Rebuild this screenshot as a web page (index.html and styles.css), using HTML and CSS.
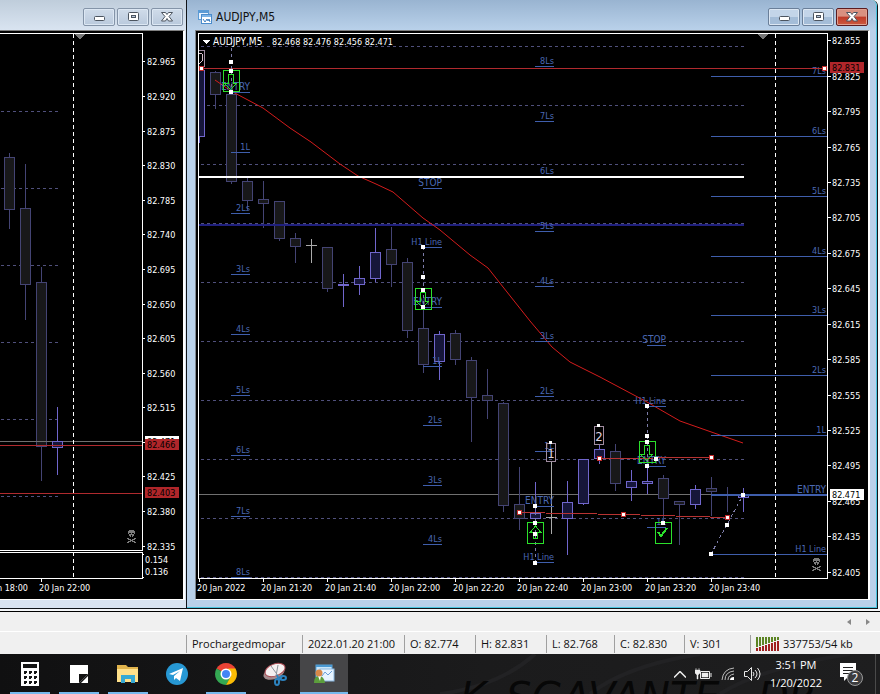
FILE: index.html
```html
<!DOCTYPE html>
<html lang="en">
<head>
<meta charset="utf-8">
<title>AUDJPY,M5</title>
<link rel="stylesheet" href="styles.css">
</head>
<body>
<svg class="defs" aria-hidden="true">
  <defs>
    <symbol id="min" viewBox="0 0 14 12"><rect x="2.5" y="5.5" width="10" height="4" rx="1" fill="#fff" stroke="#4c5560"/></symbol>
    <symbol id="max" viewBox="0 0 14 12"><rect x="2.5" y="1.5" width="10" height="8" rx="1" fill="#fff" stroke="#4c5560"/><rect x="5.5" y="4.5" width="4" height="2" fill="#b8c8dc" stroke="#4c5560"/></symbol>
    <symbol id="close" viewBox="0 0 14 12"><path d="M1.500 1.500h4l1.500 2 1.500-2h4l-3.500 4 3.500 4.500h-4l-1.500-2.500-1.500 2.500h-4l3.500-4.500z" fill="#fff" stroke="#4c5560"/></symbol>
    <symbol id="skull" viewBox="0 0 9 13"><path d="M2 0h5v1h1v3h-1v2h-1v1h-3v-1h-1v-2h-1v-3h1zM0 8h2v1h2v1h1v-1h2v-1h2v1h-1v1h-2v1h2v1h1v1h-2v-1h-2v-1h-1v1h-2v1h-2v-1h1v-1h2v-1h-2v-1h-1z" fill="#7c7c7c"/><path d="M2 3h2v1h-2zM5 3h2v1h-2zM4 5h1v2h-1z" fill="#000"/></symbol>
    <symbol id="dot" viewBox="0 0 4 4"><rect width="4" height="4" fill="#fff"/></symbol>
    <symbol id="reddot" viewBox="0 0 5 5"><rect x=".5" y=".5" width="4" height="4" fill="#fff" stroke="#c22a2a"/></symbol>
    <symbol id="down" viewBox="0 0 17 22"><path d="M.5.500h16v21h-16zM5.500 4.500h5v9h3l-6 6-6-6h4z" fill="none" stroke="#2be02b"/></symbol>
  </defs>
</svg>

<main class="workspace">
  <section class="window inactive" aria-label="Background chart">
    <div class="frame">
      <header class="titlebar">
        <div class="controls">
          <button aria-label="Minimize"><svg><use href="#min"/></svg></button>
          <button aria-label="Maximize"><svg><use href="#max"/></svg></button>
          <button aria-label="Close"><svg><use href="#close"/></svg></button>
        </div>
      </header>
      <div class="chart">
        <svg viewBox="0 31 183 568">
          <path class="grid" d="M1 111.500H59M1 188.500H59M1 265.500H59M1 342.500H59M1 419.500H59M1 496.500H59"/>
          <g class="bear">
            <path d="M9.500 153V229M25.500 164V320M41.500 267V481"/>
            <rect x="4.500" y="157.500" width="10" height="52"/><rect x="20.500" y="208.500" width="10" height="76"/><rect x="36.500" y="282.500" width="10" height="164"/>
          </g>
          <path class="price" d="M0 441.500H142"/>
          <g class="bull"><path d="M57.500 407V475"/><rect x="52.500" y="441.500" width="10" height="6"/></g>
          <path class="red" d="M0 445.500H142M0 493.500H142"/>
          <path class="session" d="M73.500 34V577"/>
          <path d="M74 34h11l-5 5h-1z" fill="#777"/>
          <path class="axis" d="M0 33.500H142.500V550.500H0M0 552.500H142.500V578.500H0M41.500 578V582M143 61.500h2M143 96.500h2M143 131.500h2M143 165.500h2M143 200.500h2M143 234.500h2M143 269.500h2M143 304.500h2M143 338.500h2M143 373.500h2M143 407.500h2M143 442.500h2M143 476.500h2M143 511.500h2M143 546.500h2M143 554.500h1M143 577.500h1"/>
          <g class="scale">
            <text x="147" y="65">82.965</text><text x="147" y="100">82.920</text><text x="147" y="135">82.875</text><text x="147" y="169">82.830</text><text x="147" y="204">82.785</text><text x="147" y="238">82.740</text><text x="147" y="273">82.695</text><text x="147" y="308">82.650</text><text x="147" y="342">82.605</text><text x="147" y="377">82.560</text><text x="147" y="411">82.515</text><text x="147" y="480">82.425</text><text x="147" y="515">82.380</text><text x="147" y="550">82.335</text>
            <text x="145" y="563">0.154</text><text x="145" y="575">0.136</text>
            <text x="28" y="591" text-anchor="end">20 Jan 18:00</text><text x="39" y="591">20 Jan 22:00</text>
          </g>
          <rect x="145" y="436" width="34" height="11" fill="#fff"/><text class="tag" x="147" y="445">82.471</text>
          <rect x="145" y="439" width="34" height="11" fill="#b0262a"/><text class="tag" x="147" y="448">82.466</text>
          <rect x="145" y="487" width="34" height="11" fill="#b0262a"/><text class="tag" x="147" y="496">82.403</text>
          <use href="#skull" x="127" y="530" width="9" height="13"/>
        </svg>
      </div>
    </div>
  </section>

  <section class="window active" aria-label="AUDJPY,M5 chart">
    <div class="frame">
      <header class="titlebar">
        <svg class="appicon" viewBox="0 0 14 14"><rect x=".5" y=".5" width="10" height="9" fill="#eaf4ff" stroke="#5b9bd5"/><path d="M1 2h9" stroke="#5b9bd5" stroke-width="2"/><rect x="3.500" y="4.500" width="10" height="9" fill="#fff" stroke="#4a8ccc"/><path d="M4 6h9" stroke="#7db4e6" stroke-width="2"/><path d="M5 9l2 3 2-3 1 2 1-2 1 3" fill="none" stroke="#3f7fc0"/></svg>
        <h1>AUDJPY,M5</h1>
        <div class="controls">
          <button aria-label="Minimize"><svg><use href="#min"/></svg></button>
          <button aria-label="Maximize"><svg><use href="#max"/></svg></button>
          <button class="close" aria-label="Close"><svg><use href="#close"/></svg></button>
        </div>
      </header>
      <div class="chart">
        <svg viewBox="196 31 672 568">
          <path class="grid" d="M201 46.500H744M201 105.500H744M201 164.500H744M201 223.500H744M201 282.500H744M201 341.500H744M201 400.500H744M201 459.500H744M201 518.500H744M201 577.500H744"/>
          <path class="price" d="M199 494.500H827"/>

          <!-- falling candles -->
          <g class="bear">
            <path d="M215.500 71V109M231.500 94V184M247.500 178V210M263.500 181V228M279.500 201V241M295.500 233V263M327.500 247V292M391.500 227V287M407.500 258V338M423.500 308V373M455.500 330V365M471.500 357V442M487.500 369V419M503.500 402V512M519.500 467V530M615.500 444V491M663.500 475V522M679.500 501V545M711.500 477V516M727.500 487V512"/>
            <rect x="210.500" y="72.500" width="10" height="22"/><rect x="226.500" y="94.500" width="10" height="87"/><rect x="242.500" y="181.500" width="10" height="19"/><rect x="258.500" y="199.500" width="10" height="4"/><rect x="274.500" y="201.500" width="10" height="37"/><rect x="290.500" y="238.500" width="10" height="8"/><rect x="322.500" y="247.500" width="10" height="41"/><rect x="386.500" y="249.500" width="10" height="15"/><rect x="402.500" y="262.500" width="10" height="68"/><rect x="418.500" y="328.500" width="10" height="36"/><rect x="450.500" y="333.500" width="10" height="26"/><rect x="466.500" y="360.500" width="10" height="37"/><rect x="482.500" y="395.500" width="10" height="5"/><rect x="498.500" y="403.500" width="10" height="102"/><rect x="514.500" y="504.500" width="10" height="14"/><rect x="610.500" y="451.500" width="10" height="32"/><rect x="658.500" y="478.500" width="10" height="20"/><rect x="674.500" y="501.500" width="10" height="3"/><rect x="706.500" y="488.500" width="10" height="3"/>
          </g>
          <!-- rising candles -->
          <g class="bull">
            <path d="M199.500 70V143M343.500 274V307M359.500 266V295M375.500 228V282M439.500 331V380M535.500 482V520M567.500 481V555M583.500 459V505M599.500 445V464M631.500 470V501M647.500 466V494M695.500 485V509M743.500 488V512"/>
            <path d="M199 70.500H204.500V136.500H199" class="body"/>
            <rect x="338.500" y="284.500" width="10" height="1"/><rect x="354.500" y="278.500" width="10" height="6"/><rect x="370.500" y="252.500" width="10" height="26"/><rect x="434.500" y="334.500" width="10" height="27"/><rect x="530.500" y="513.500" width="10" height="5"/><rect x="562.500" y="502.500" width="10" height="16"/><rect x="578.500" y="459.500" width="10" height="44"/><rect x="594.500" y="449.500" width="10" height="9"/><rect x="626.500" y="481.500" width="10" height="6"/><rect x="642.500" y="481.500" width="10" height="2"/><rect x="690.500" y="489.500" width="10" height="15"/><rect x="738.500" y="495.500" width="10" height="2"/>
          </g>
          <path class="doji" d="M311.500 239V263M306 245.500H317M551.500 461V534M546 517.500H557"/>

          <path d="M199 225H744" stroke="#20207e" stroke-width="2"/>
          <polyline class="average" points="215,80 231,91 263,108 290,128 311,142 340,164 358,176 376,184 393,192 423,218 440,230 470,255 488,268 507,292 530,321 552,347 570,362 600,377 647,402 680,421 717,434 743,443"/>
          <path d="M199 177H744" stroke="#fff" stroke-width="2"/>

          <!-- level marks -->
          <path class="levels" d="M231 92.500h19M231 152.500h19M231 213.500h19M231 274.500h19M231 334.500h19M231 395.500h19M231 455.500h19M231 516.500h19M231 577.500h19M423 188.500h19M423 247.500h19M423 307.500h19M423 366.500h19M423 425.500h19M423 485.500h19M423 544.500h19M535 66.500h19M535 121.500h19M535 231.500h19M535 286.500h19M535 341.500h19M535 396.500h19M535 451.500h19M535 506.500h19M535 562.500h19M647 345.500h19M647 406.500h19M647 466.500h19M647 527.500h19M711 76.500H827M711 136.500H827M711 196.500H827M711 256.500H827M711 315.500H827M711 375.500H827M711 435.500H827M711 494.500H827M711 495.500H827M711 554.500H827"/>
          <g class="labels">
            <text class="word" x="250" y="90">ENTRY</text><text x="250" y="150">1L</text><text x="250" y="211">2Ls</text><text x="250" y="272">3Ls</text><text x="250" y="332">4Ls</text><text x="250" y="393">5Ls</text><text x="250" y="453">6Ls</text><text x="250" y="514">7Ls</text><text x="250" y="575">8Ls</text>
            <text class="word" x="442" y="186">STOP</text><text x="442" y="245">H1 Line</text><text class="word" x="442" y="305">ENTRY</text><text x="442" y="364">1L</text><text x="442" y="423">2Ls</text><text x="442" y="483">3Ls</text><text x="442" y="542">4Ls</text>
            <text x="554" y="64">8Ls</text><text x="554" y="119">7Ls</text><text x="554" y="174">6Ls</text><text x="554" y="229">5Ls</text><text x="554" y="284">4Ls</text><text x="554" y="339">3Ls</text><text x="554" y="394">2Ls</text><text x="554" y="449">1L</text><text class="word" x="554" y="504">ENTRY</text><text x="554" y="560">H1 Line</text>
            <text class="word" x="666" y="343">STOP</text><text x="666" y="404">H1 Line</text><text class="word" x="666" y="464">ENTRY</text><text x="666" y="525">1L</text>
            <text x="826" y="74">7Ls</text><text x="826" y="134">6Ls</text><text x="826" y="194">5Ls</text><text x="826" y="254">4Ls</text><text x="826" y="313">3Ls</text><text x="826" y="373">2Ls</text><text x="826" y="433">1L</text><text class="word" x="826" y="493">ENTRY</text><text x="826" y="552">H1 Line</text>
          </g>

          <path class="red" d="M199 68.500H827"/>
          <path d="M519 512.500L623 514.500 727 517.500M599 458.500L711 457.500" fill="none" stroke="#b83232"/>
          <path class="link" d="M231.500 36V92M423.500 247V307M535.500 506V562M647.500 406V466M711 554L743 495"/>

          <!-- signal markers -->
          <use href="#down" x="223" y="70" width="17" height="22"/><use href="#down" x="415" y="288" width="17" height="22"/><use href="#down" x="639" y="441" width="17" height="22"/>
          <path d="M527.500 522.500h16v21h-16zM535.500 526l5 6h-3v6h-4v-6h-3z" fill="none" stroke="#2be02b"/>
          <path d="M655.500 522.500h16v21h-16z" fill="none" stroke="#2be02b"/>
          <path d="M658 532l3 4 6-8" fill="none" stroke="#2be02b" stroke-width="2"/>
          <path d="M199 50.500h5.500v16H199M546.500 443.500h9v18h-9zM594.500 426.500h9v18h-9z" fill="none" stroke="#a08ca0"/>
          <path d="M199 54q4-2 4 3 0 4-4 7" fill="none" stroke="#d8c0cc"/>
          <text class="count" x="551" y="458">1</text><text class="count" x="599" y="441">2</text>
          <use href="#dot" x="229" y="60" width="4" height="4"/><use href="#dot" x="229" y="69" width="4" height="4"/><use href="#dot" x="229" y="90" width="4" height="4"/>
          <use href="#dot" x="421" y="245" width="4" height="4"/><use href="#dot" x="421" y="275" width="4" height="4"/><use href="#dot" x="421" y="288" width="4" height="4"/><use href="#dot" x="421" y="305" width="4" height="4"/>
          <use href="#dot" x="549" y="441" width="3" height="3"/><use href="#dot" x="597" y="424" width="3" height="3"/>
          <use href="#dot" x="533" y="504" width="4" height="4"/><use href="#dot" x="533" y="521" width="4" height="4"/><use href="#dot" x="533" y="532" width="4" height="4"/><use href="#dot" x="533" y="561" width="4" height="4"/>
          <use href="#dot" x="645" y="404" width="4" height="4"/><use href="#dot" x="645" y="434" width="4" height="4"/><use href="#dot" x="645" y="440" width="4" height="4"/><use href="#dot" x="645" y="464" width="4" height="4"/><use href="#dot" x="654" y="457" width="4" height="4"/>
          <use href="#dot" x="661" y="521" width="4" height="4"/><use href="#dot" x="709" y="552" width="4" height="4"/><use href="#dot" x="725" y="523" width="4" height="4"/><use href="#dot" x="741" y="493" width="4" height="4"/>
          <use href="#reddot" x="199" y="66" width="5" height="5"/><use href="#reddot" x="822" y="66" width="5" height="5"/>
          <use href="#reddot" x="517" y="510" width="5" height="5"/><use href="#reddot" x="621" y="512" width="5" height="5"/><use href="#reddot" x="725" y="515" width="5" height="5"/>
          <use href="#reddot" x="597" y="456" width="5" height="5"/><use href="#reddot" x="709" y="455" width="5" height="5"/>

          <path class="session" d="M775.500 34V577"/>
          <path d="M757 34h11l-5 5h-1z" fill="#777"/>
          <path class="axis" d="M827.500 578.500H198.500V33.500H827.500ZM828 40.500h3M828 76.500h3M828 111.500h3M828 147.500h3M828 182.500h3M828 217.500h3M828 253.500h3M828 288.500h3M828 324.500h3M828 359.500h3M828 395.500h3M828 430.500h3M828 465.500h3M828 501.500h3M828 536.500h3M828 572.500h3M199.500 579v3M263.500 579v3M327.500 579v3M391.500 579v3M455.500 579v3M519.500 579v3M583.500 579v3M647.500 579v3M711.500 579v3"/>
          <g class="scale">
            <text x="832" y="44">82.855</text><text x="832" y="80">82.825</text><text x="832" y="115">82.795</text><text x="832" y="151">82.765</text><text x="832" y="186">82.735</text><text x="832" y="221">82.705</text><text x="832" y="257">82.675</text><text x="832" y="292">82.645</text><text x="832" y="328">82.615</text><text x="832" y="363">82.585</text><text x="832" y="399">82.555</text><text x="832" y="434">82.525</text><text x="832" y="469">82.495</text><text x="832" y="505">82.465</text><text x="832" y="540">82.435</text><text x="832" y="576">82.405</text>
            <text x="197" y="591">20 Jan 2022</text><text x="261" y="591">20 Jan 21:20</text><text x="325" y="591">20 Jan 21:40</text><text x="389" y="591">20 Jan 22:00</text><text x="453" y="591">20 Jan 22:20</text><text x="517" y="591">20 Jan 22:40</text><text x="581" y="591">20 Jan 23:00</text><text x="645" y="591">20 Jan 23:20</text><text x="709" y="591">20 Jan 23:40</text>
            <text class="word" x="213" y="45">AUDJPY,M5</text><text x="272" y="45">82.468 82.476 82.456 82.471</text>
          </g>
          <path d="M202 40h8l-4 4z" fill="#fff"/>
          <rect x="830" y="62" width="34" height="11" fill="#b0262a"/><text class="tag" x="832" y="71">82.831</text>
          <rect x="830" y="489" width="34" height="11" fill="#fff"/><text class="tag" x="832" y="498">82.471</text>
          <use href="#skull" x="812" y="558" width="9" height="13"/>
        </svg>
      </div>
    </div>
  </section>
</main>

<nav class="tabstrip" aria-label="Chart tabs">
  <button aria-label="Scroll left"><svg viewBox="0 0 4 6"><path d="M4 0v6L0 3z"/></svg></button>
  <button aria-label="Scroll right"><svg viewBox="0 0 4 6"><path d="M0 0v6l4-3z"/></svg></button>
</nav>

<div class="statusbar">
  <span></span><span>Prochargedmopar</span><span>2022.01.20 21:00</span><span>O: 82.774</span><span>H: 82.831</span><span>L: 82.768</span><span>C: 82.830</span><span>V: 301</span>
  <span><svg class="bars" viewBox="0 0 24 14"><path d="M1 0v10M4 0v9M7 0v8M10 0v7M13 0v6M16 0v5M19 0v4M22 0v3" stroke="#5c8424" stroke-width="2"/><path d="M1 11v3M4 10v4M7 9v5M10 8v6M13 7v7M16 6v8M19 5v9M22 4v10" stroke="#a02020" stroke-width="2"/></svg>337753/54 kb</span>
</div>

<footer class="taskbar">
  <svg class="wallpaper" viewBox="440 654 440 40" aria-hidden="true"><path d="M440 694Q500 686 535 654M590 694Q625 666 700 654M720 694Q760 668 850 654" fill="none" stroke="#222224" stroke-width="4"/><text x="460" y="711">K</text><text x="506" y="711">SGA</text><text x="588" y="711">VANTE</text><text x="758" y="711">DR</text></svg>
  <div class="apps">
    <button class="open" aria-label="Calculator"><svg viewBox="0 0 24 24"><rect x="3" width="18" height="24" fill="#fff"/><path d="M5 2h14v4H5zM6 9h3v2H8v1H6zM11 9h3v2h-1v1h-2zM16 9h3v2h-1v1h-2zM6 14h3v2H8v1H6zM11 14h3v2h-1v1h-2zM16 14h3v2h-1v1h-2zM6 19h3v2H8v1H6zM11 19h3v2h-1v1h-2zM16 19h3v2h-1v1h-2z" fill="#151515"/></svg></button>
    <button class="open" aria-label="Sticky notes"><svg viewBox="0 0 24 24"><path d="M3 3h18v9l-9 9H3z" fill="#fff"/><path d="M12 21v-9h9z" fill="#111"/><path d="M14 21h7v-7z" fill="#fff"/></svg></button>
    <button class="open" aria-label="File explorer"><svg viewBox="0 0 24 24"><path d="M1 3h9l2 2h10v6H1z" fill="#e0b34c"/><path d="M1 7h21v13H1z" fill="#ffe08a"/><path d="M5 21v-8h14v8h-4v-4H9v4z" fill="#36a9d4"/></svg></button>
    <button aria-label="Telegram"><svg viewBox="0 0 24 24"><circle cx="12" cy="12" r="11" fill="#2798d4"/><path d="M4 12l14-6-3 13-4-3-2 2v-4l6-5-7 4z" fill="#fff"/></svg></button>
    <button class="open" aria-label="Chrome"><svg viewBox="0 0 24 24"><path d="M12 12L2.500 6.500A11 11 0 0 1 21.500 6.500z" fill="#ea4335"/><path d="M2.500 6.500A11 11 0 0 0 12 23l5-8-5-3z" fill="#34a853"/><path d="M21.500 6.500A11 11 0 0 1 12 23l5-9-3-7.500z" fill="#fbbc05"/><circle cx="12" cy="12" r="5.500" fill="#fff"/><circle cx="12" cy="12" r="4" fill="#4285f4"/></svg></button>
    <button aria-label="Snipping tool"><svg viewBox="0 0 24 24"><ellipse cx="11" cy="11" rx="11" ry="6" transform="rotate(-20 11 11)" fill="#a58c8e"/><ellipse cx="12" cy="8" rx="10.500" ry="6" transform="rotate(-20 12 8)" fill="#f5f0f0" stroke="#a84850"/><path d="M8 4l8 11M15 3l-2 11" stroke="#8b9299"/><ellipse cx="14" cy="20" rx="2" ry="3" fill="none" stroke="#2c83c0" stroke-width="2"/><ellipse cx="20" cy="16" rx="3" ry="2" fill="none" stroke="#2c83c0" stroke-width="2"/><path d="M14 13l2 5 3-3" fill="none" stroke="#2c83c0" stroke-width="2"/></svg></button>
    <button class="open current" aria-label="MetaTrader"><svg viewBox="0 0 24 24"><rect x="4" y="3" width="16" height="12" fill="#c8e6fa" stroke="#5aa3d8"/><path d="M4 4h16" stroke="#4a9ad4" stroke-width="2"/><rect x="8" y="7" width="14" height="12" fill="#e8f4ff" stroke="#8ab8e0"/><path d="M10 14l3-4 3 3 4-4" stroke="#6aa0d8" fill="none"/><path d="M2 21q0-7 5-7t6 7z" fill="#5c9e3c"/><path d="M6 14h3l-1 5z" fill="#fff"/><circle cx="7" cy="11" r="3.500" fill="#d88848"/></svg></button>
  </div>
  <div class="tray">
    <button aria-label="Show hidden icons"><svg class="chevron" viewBox="0 0 12 7"><path d="M0 6.500l6-6 6 6" fill="none" stroke="#eee" stroke-width="1.500"/></svg></button>
    <button aria-label="Battery"><svg class="battery" viewBox="0 0 17 12"><path d="M5.500 3.500h9v7h-9zM16 5v4" fill="none" stroke="#eee"/><path d="M7 5h6v4H7zM0 2h5v3L3 7v4H2V7L0 5zM1 0v2M4 0v2" fill="#eee" stroke="#eee" stroke-width=".5"/></svg></button>
    <button aria-label="Network"><svg class="wifi" viewBox="0 0 14 14"><path d="M1 13Q2 2 13 1M4 13Q4 5 13 4M7 13Q7 8 13 7" fill="none" stroke="#bbb"/><path d="M9 13q0-3 4-3v3z" fill="#fff"/></svg></button>
    <button aria-label="Volume"><svg class="volume" viewBox="0 0 17 14"><path d="M.500 4.500h3l4-4v13l-4-4h-3zM9 5q2 2 0 4M11 3q4 4 0 8M13.500 1q5 6 0 12" fill="none" stroke="#e8e8e8"/></svg></button>
    <time datetime="2022-01-20T15:51"><span>3:51 PM</span><span>1/20/2022</span></time>
    <button class="notice" aria-label="Notifications"><svg viewBox="0 0 26 24"><path d="M1 1h16v14H9l-4 4v-4H1z" fill="#fff"/><path d="M4 5.500h10M4 8.500h10M4 11.500h7" stroke="#222"/><circle cx="16" cy="16" r="7.500" fill="#3c3c3e" stroke="#999"/><text x="16" y="20" text-anchor="middle">2</text></svg></button>
  </div>
</footer>
</body>
</html>
```
FILE: styles.css
```css
* { box-sizing: border-box; }
body {
  margin: 0;
  background: #f0f0f0;
  font-family: "DejaVu Sans Condensed", "DejaVu Sans", sans-serif;
  color: #111;
}
button { padding: 0; border: 0; background: none; }
svg { display: block; }
.defs { position: absolute; width: 0; height: 0; }

/* chart windows */
.workspace {
  display: grid;
  grid-template-columns: 187fr 693fr;
  border-bottom: 1px solid #000;
  padding-bottom: 2px;
  background: #f4f6f8;
}
.window { border-right: 1px solid #101418; border-bottom: 1px solid #101418; }
.active { margin-right: 2px; border-top-right-radius: 6px; }
.frame { background: #dae5f2; padding: 0 1px 8px 0; }
.inactive .frame { background: linear-gradient(#bfcddb, #d9e4f1 30px); }
.active .frame {
  background: linear-gradient(#99b4d1, #b9d1ea 30px);
  border-right: 1px solid #49c5df;
  border-bottom: 1px solid #49c5df;
  border-top-right-radius: 6px;
  padding: 0 6px 7px 8px;
}
.titlebar {
  display: flex;
  align-items: center;
  height: 30px;
  padding: 4px 2px 0 3px;
}
.titlebar h1 { margin: 0 0 0 4px; font-size: 12px; font-weight: 400; line-height: 16px; }
.appicon { width: 14px; height: 14px; }
.controls { display: flex; gap: 2px; margin-left: auto; }
.controls button {
  display: grid;
  place-items: center;
  width: 32px;
  height: 18px;
  border: 1px solid #8494a8;
  border-radius: 2px;
  background: linear-gradient(#d0dcea, #b9c9dc);
  box-shadow: inset 0 0 0 1px #dce7f3;
}
.controls svg { width: 14px; height: 12px; }
.active .controls button { border-color: #6a7f99; background: linear-gradient(#c3d5e9 50%, #a4bdd8 50%); }
.active .controls .close {
  border-color: #5c1c20;
  background: linear-gradient(#d99080 45%, #bf3a28 50%, #cc5a40);
  box-shadow: inset 0 0 0 1px #e0a090;
}
.chart {
  background: #000;
  border-top: 1px solid #808080;
  border-right: 2px solid #fff;
  border-bottom: 1px solid #fff;
}
.active .chart { border-left: 1px solid #808890; }
.chart svg { width: 100%; height: auto; font-size: 9px; }

/* chart drawing */
.chart path, .chart rect, symbol path, symbol rect { shape-rendering: crispEdges; }
#min rect, #max rect, #close path { shape-rendering: auto; }
.grid { stroke: #50507c; stroke-dasharray: 3 3; }
.session { stroke: #fff; stroke-dasharray: 4 3; }
.axis { fill: none; stroke: #fff; }
.price { stroke: #707070; }
.red { stroke: #b02a2e; }
.bear path { stroke: #444474; }
.bear rect { fill: #18181a; stroke: #444474; }
.bull path { fill: none; stroke: #7066cc; }
.bull rect, .bull .body { fill: #16163a; stroke: #7066cc; }
.doji { stroke: #aaa; }
.average { fill: none; stroke: #d41c1c; }
.levels { stroke: #3f5eac; }
.labels { fill: #4b69b4; text-anchor: end; }
.link { fill: none; stroke: #7c7ca8; stroke-dasharray: 3 3; }
.scale { fill: #fff; }
.tag { fill: #000; }
.word { font-size: 10px; }
.count { fill: #e0d4e0; font-size: 13px; text-anchor: middle; }

/* tab scroller and status bar */
.tabstrip {
  display: flex;
  justify-content: flex-end;
  align-items: center;
  gap: 3px;
  height: 19px;
  padding-right: 4px;
  background: #f0f0f0;
}
.tabstrip button { display: grid; place-items: center; width: 16px; height: 16px; }
.tabstrip svg { width: 4px; height: 6px; fill: #888; }
.statusbar {
  display: grid;
  grid-template-columns: 186fr 116fr 102fr 71fr 71fr 68fr 70fr 66fr 130fr;
  height: 23px;
  padding: 3px 0 1px;
  border-top: 1px solid #fff;
  font: 11px/18px "Open Sans", sans-serif;
  white-space: nowrap;
}
.statusbar span { display: flex; align-items: center; border-left: 1px solid #a0a0a0; padding-left: 5px; }
.statusbar span:first-child { border: 0; }
.bars { width: 24px; height: 14px; margin-right: 3px; }

/* taskbar */
.taskbar {
  position: relative;
  display: flex;
  justify-content: space-between;
  height: 40px;
  background: linear-gradient(90deg, #101011, #1b1b1c 55%, #1e1e1f);
}
.wallpaper {
  position: absolute;
  right: 0;
  bottom: 0;
  width: 50%;
  height: 40px;
  fill: #070707;
  font: italic 40px "DejaVu Sans", sans-serif;
}
.apps { position: relative; display: flex; gap: 1px; padding-left: 6px; }
.apps button { display: grid; place-items: center; width: 48px; height: 40px; }
.apps svg { width: 24px; height: 24px; }
.apps .open { background: linear-gradient(#76b9ed, #76b9ed) bottom / 40px 2px no-repeat; }
.apps .current { background: linear-gradient(#76b9ed, #76b9ed) bottom / 48px 2px no-repeat #464648; }
.tray {
  position: relative;
  display: flex;
  align-items: center;
  gap: 9px;
  margin-right: 4px;
  padding-right: 10px;
  border-right: 1px solid #4a4a4a;
}
.chevron { width: 12px; height: 7px; }
.battery { width: 17px; height: 12px; }
.wifi { width: 14px; height: 14px; }
.volume { width: 17px; height: 14px; }
.tray time { display: flex; flex-direction: column; align-items: center; color: #fff; font: 11px/18px "Open Sans", sans-serif; }
.notice { margin-left: 8px; }
.notice svg { width: 26px; height: 24px; fill: #fff; font: 12px "Open Sans", sans-serif; }
```
